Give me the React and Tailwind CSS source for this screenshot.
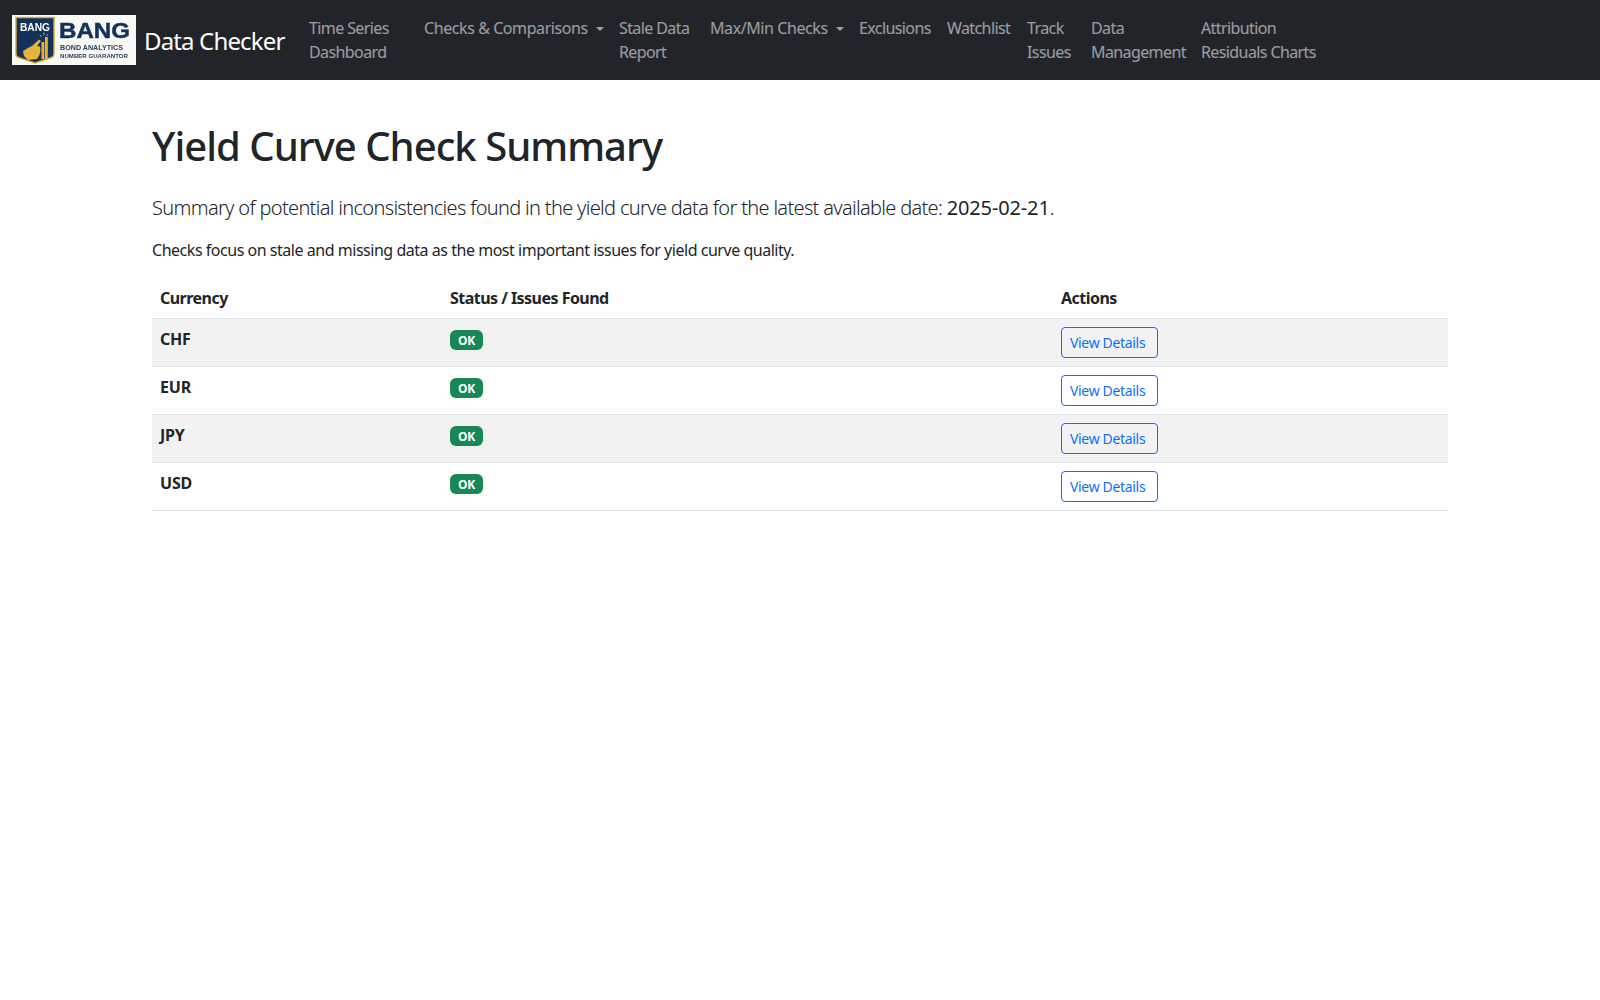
const navItems = [
  { w: 'w-[115px]', tracking: 'tracking-[-0.6px]', lines: ['Time Series', 'Dashboard'] },
  { w: 'w-[195px]', tracking: 'tracking-[-0.42px]', lines: ['Checks & Comparisons'], caret: true },
  { w: 'w-[91px]', tracking: 'tracking-[-0.6px]', lines: ['Stale Data', 'Report'] },
  { w: 'w-[149px]', tracking: 'tracking-[-0.42px]', lines: ['Max/Min Checks'], caret: true },
  { w: 'w-[88px]', tracking: 'tracking-[-0.6px]', lines: ['Exclusions'] },
  { w: 'w-[80px]', tracking: 'tracking-[-0.6px]', lines: ['Watchlist'] },
  { w: 'w-[64px]', tracking: 'tracking-[-0.6px]', lines: ['Track', 'Issues'] },
  { w: 'w-[110px]', tracking: 'tracking-[-0.6px]', lines: ['Data', 'Management'] },
  { w: 'w-[131px]', tracking: 'tracking-[-0.6px]', lines: ['Attribution', 'Residuals Charts'] },
];

const currencies = ['CHF', 'EUR', 'JPY', 'USD'];

function Logo() {
  return (
    <svg width="124" height="50" viewBox="0 0 124 50" className="block shrink-0 blur-[0.3px]">
      <rect width="124" height="50" fill="#f8f8f5" />
      <path d="M4 2.5H42V39Q42 42 38 43L23 48L8 43Q4 42 4 39Z" fill="#14315a" stroke="#d9a93a" strokeWidth="1.4" />
      <text x="23" y="16" textAnchor="middle" fontFamily="Liberation Sans" fontWeight="700" fontSize="10.5" fill="#fff" textLength="30" lengthAdjust="spacingAndGlyphs">BANG</text>
      <path d="M11 36L16 33L20 31L27 24.5L29 26L25 31L28 31.5L28.5 35L27.5 40L25 44L16 45L12 41Z" fill="#e8b23c" />
      <rect x="29.5" y="27" width="2.8" height="17" fill="#e8b23c" />
      <rect x="33" y="22" width="2.8" height="22" fill="#e8b23c" />
      <path d="M28 20L29.5 22M32 17.5V20.5M36 19L34.5 21" stroke="#e8b23c" strokeWidth="0.9" />
      <text x="47" y="23" fontFamily="Liberation Sans" fontWeight="700" fontSize="22" fill="#14315a" stroke="#14315a" strokeWidth="0.5" textLength="71" lengthAdjust="spacingAndGlyphs">BANG</text>
      <text x="48" y="35" fontFamily="Liberation Sans" fontWeight="700" fontSize="7" fill="#2b4266" textLength="63" lengthAdjust="spacingAndGlyphs">BOND ANALYTICS</text>
      <text x="48" y="42.5" fontFamily="Liberation Sans" fontWeight="700" fontSize="6" fill="#2b4266" textLength="68" lengthAdjust="spacingAndGlyphs">NUMBER GUARANTOR</text>
    </svg>
  );
}

export default function App() {
  return (
    <div className="min-h-[1000px] bg-white font-['Noto_Sans',sans-serif] text-[#212529]">
      <nav className="flex h-20 items-center bg-[#212529] pl-3">
        <Logo />
        <span className="mt-[2px] ml-2 mr-4 w-[141px] text-2xl leading-9 tracking-[-0.85px] whitespace-nowrap text-white">Data Checker</span>
        <div className="flex items-start">
          {navItems.map((item) => (
            <a key={item.lines[0]} className={`${item.w} ${item.tracking} shrink-0 px-2 text-base leading-6 text-white/55`}>
              {item.lines.map((line) => (
                <div key={line} className="whitespace-nowrap">
                  {line}
                  {item.caret && (
                    <span className="ml-2 inline-block border-x-[4.8px] border-t-[4.8px] border-x-transparent border-t-white/55 align-[3px]" />
                  )}
                </div>
              ))}
            </a>
          ))}
        </div>
      </nav>
      <main className="mx-auto w-[1320px] px-3 pt-6">
        <h1 className="mt-[18px] mb-[23px] text-[40px] leading-[48px] font-medium tracking-[-0.98px]">Yield Curve Check Summary</h1>
        <p className="mb-[15px] text-xl leading-[30px] font-light tracking-[-0.68px]">
          Summary of potential inconsistencies found in the yield curve data for the latest available date: <span className="font-normal tracking-[-0.14px]">2025-02-21</span>.
        </p>
        <p className="mb-4 text-base leading-6 tracking-[-0.47px]">Checks focus on stale and missing data as the most important issues for yield curve quality.</p>
        <table className="w-full border-collapse text-left">
          <thead>
            <tr className="border-b border-[#dee2e6]">
              <th className="w-[290px] p-2 leading-6 font-bold tracking-[-0.53px]">Currency</th>
              <th className="w-[611px] p-2 leading-6 font-bold tracking-[-0.53px]">Status / Issues Found</th>
              <th className="p-2 leading-6 font-bold tracking-[-0.53px]">Actions</th>
            </tr>
          </thead>
          <tbody>
            {currencies.map((code, i) => (
              <tr key={code} className={`h-12 border-b border-[#dee2e6] ${i % 2 === 0 ? 'bg-[#f2f2f2]' : 'bg-white'}`}>
                <td className="p-2 align-top leading-6 font-bold tracking-[-0.2px]">{code}</td>
                <td className="p-2 align-top leading-6">
                  <span className="inline-block w-[33px] rounded-md bg-[#198754] pt-[5px] pb-[3px] text-center text-xs leading-3 font-bold tracking-[-0.3px] text-white">OK</span>
                </td>
                <td className="p-2 align-top leading-6">
                  <button className="h-[31px] w-[97px] rounded border border-[#0d6efd] pl-2 text-left text-sm leading-[21px] tracking-[-0.33px] text-[#0d6efd]">View Details</button>
                </td>
              </tr>
            ))}
          </tbody>
        </table>
      </main>
    </div>
  );
}
